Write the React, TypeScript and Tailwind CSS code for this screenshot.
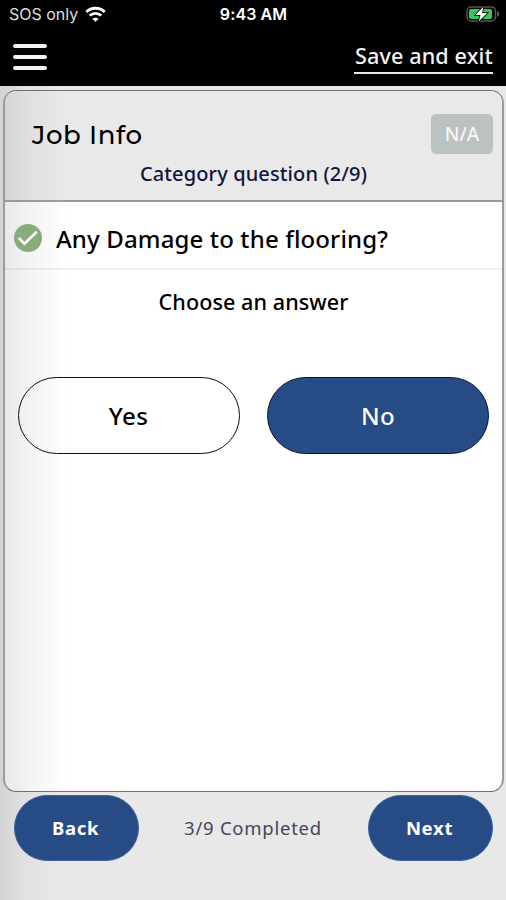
const noto = "font-['Noto_Sans','Open_Sans',sans-serif]";

function StatusBar() {
  return (
    <div className="grid h-7 grid-cols-[1fr_auto_1fr] items-center pl-[9px] pr-[6px] font-['Inter',sans-serif] text-white">
      <div className="flex items-center gap-[7px]">
        <span className="text-[16px] leading-5 tracking-[-0.02px] text-[#dedede]">SOS only</span>
        <svg width="21" height="16" viewBox="0 0 21 16" fill="none" stroke="white" strokeWidth="2.8">
          <path d="M1.3 5.9C6.4 1 14.6 1 19.7 5.9" />
          <path d="M4.7 9.6C8 6.5 13 6.5 16.3 9.6" />
          <path d="M10.5 15.8 7.4 12.9C9 11.3 12 11.3 13.6 12.9Z" fill="white" stroke="none" />
        </svg>
      </div>
      <span className="mr-[2px] text-[16px] font-semibold leading-5 tracking-[0.1px]">9:43 AM</span>
      <svg className="justify-self-end" width="34" height="18" viewBox="0 0 34 18">
        <rect x="1" y="2" width="28.5" height="14" rx="4" fill="none" stroke="#555" strokeWidth="1.5" />
        <path d="M31 6.2c1.6.5 2.3 1.5 2.3 2.8s-.7 2.3-2.3 2.8z" fill="#555" />
        <rect x="3" y="4" width="23" height="10" rx="2" fill="#35c759" />
        <path d="M17.5 1.5 9.5 10h5l-1.7 6.5 8.4-8.5h-5.1z" fill="white" stroke="black" strokeWidth="1.6" paintOrder="stroke" />
      </svg>
    </div>
  );
}

export default function App() {
  return (
    <div className={`flex h-[900px] w-[506px] flex-col overflow-hidden bg-[linear-gradient(90deg,#d4d4d4_0px,#e1e1e1_24px,#e8e8e8_60px)] text-black ${noto}`}>
      <header className="h-[86px] shrink-0 bg-black">
        <StatusBar />
        <div className="flex justify-between pl-[13px] pr-[13px]">
          <button aria-label="Menu" className="mt-4 flex h-[26px] w-[34px] flex-col justify-between">
            <span className="h-[4px] w-full rounded-[2px] bg-[#f4f4f4]" />
            <span className="h-[4px] w-full rounded-[2px] bg-[#f4f4f4]" />
            <span className="h-[4px] w-full rounded-[2px] bg-[#f4f4f4]" />
          </button>
          <button className="mt-[13px] flex h-[33px] w-[139px] items-start whitespace-nowrap border-b-2 border-[#e8e8e8] pl-px text-[21.6px] font-medium leading-[30px] tracking-[0.12px] text-[#f2f2f2]">
            Save and exit
          </button>
        </div>
      </header>

      <main className="ml-[3px] mr-[2px] mt-1 flex h-[702px] shrink-0 flex-col overflow-hidden rounded-[13px] border-x-2 border-y-[1.5px] border-x-[#9b9b9b] border-y-[#707070] bg-[linear-gradient(90deg,#e9e9e9_0px,#f3f3f3_24px,#fff_62px)]">
        <section className="h-[111px] shrink-0 border-b-2 border-[#9b9b9b] bg-[linear-gradient(90deg,#d5d5d5_0px,#e0e0e0_24px,#e9e9e9_60px)]">
          <div className="flex justify-between pl-[27px] pr-[9px] pt-[23px]">
            <h1 className="mt-[3px] font-['Montserrat','Inter',sans-serif] text-[26px] font-medium leading-9 tracking-[0.6px]">Job Info</h1>
            <span className="flex h-10 w-[62px] items-center justify-center rounded-[5px] bg-[#bcc1c1] pt-px text-[19px] font-medium text-[#f7f7f7]">N/A</span>
          </div>
          <p className="mt-[6px] text-center text-[20px] font-medium leading-7 tracking-[0.12px] text-[#14153c]">Category question (2/9)</p>
        </section>
        <section className="flex h-[68px] shrink-0 items-center border-b-2 border-black/5 pl-[9px] pt-[6px]">
          <svg width="28" height="28" viewBox="0 0 28 28" fill="none">
            <circle cx="14" cy="14" r="14" fill="#86ad7b" />
            <path d="m4.8 14 5.7 5.7L22.8 7.7" stroke="white" strokeWidth="2.6" />
          </svg>
          <h2 className="ml-[14px] pt-[2px] text-[24px] font-medium leading-8 tracking-[0.14px]">Any Damage to the flooring?</h2>
        </section>
        <p className="mt-[16px] text-center text-[21.6px] font-medium leading-8 tracking-[0.05px]">Choose an answer</p>
        <div className="mt-[59px] flex justify-between px-[13px]">
          <button className="h-[77px] w-[222px] rounded-full border-[1.5px] border-[#111] pr-px text-[24px] font-medium tracking-[0.4px]">Yes</button>
          <button className="h-[77px] w-[222px] rounded-full border-[1.5px] border-[#06142d] bg-[#264b85] text-[24px] font-medium tracking-[0.4px] text-white">No</button>
        </div>
      </main>

      <footer className="mt-[3px] flex items-center justify-between pl-[14px] pr-[13px]">
        <button className="h-[66px] w-[125px] rounded-full border border-[#3c619b] bg-[#264b85] pr-[2px] text-[18.5px] font-bold tracking-[0.7px] text-white">Back</button>
        <span className="pb-px pr-px text-[18.5px] tracking-[0.75px] text-[#45455a]">3/9 Completed</span>
        <button className="h-[66px] w-[125px] rounded-full border border-[#3c619b] bg-[#264b85] pr-[2px] text-[18.5px] font-bold tracking-[0.7px] text-white">Next</button>
      </footer>
    </div>
  );
}
